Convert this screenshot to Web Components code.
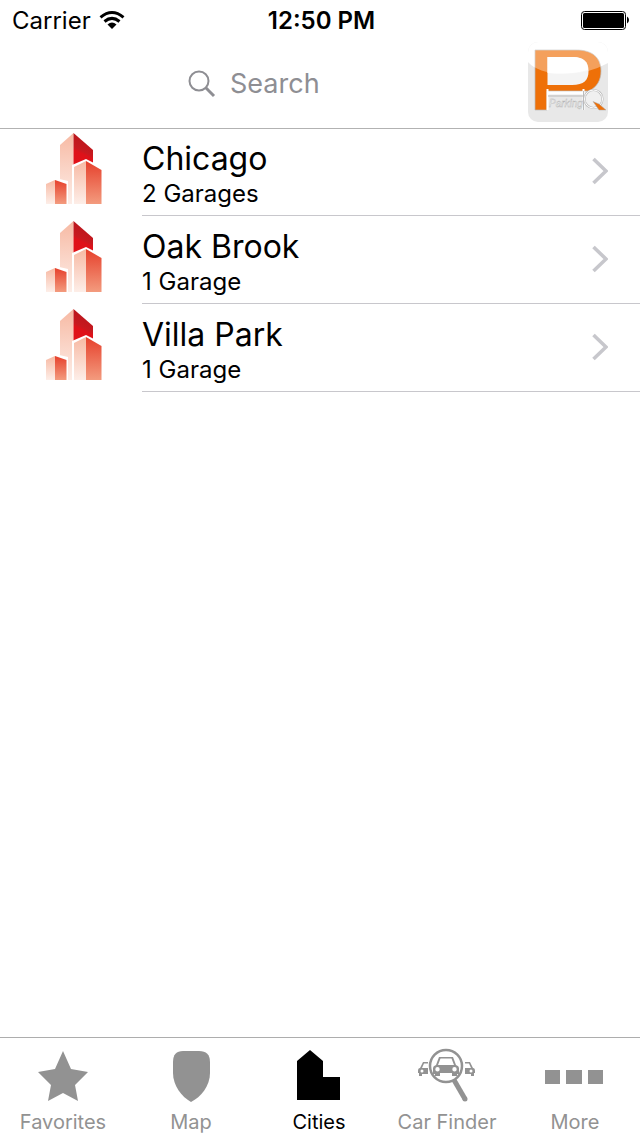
<!DOCTYPE html>
<html lang="en">
<head>
<meta charset="utf-8">
<meta name="viewport" content="width=device-width, initial-scale=1">
<title>Cities</title>
<style>
html, body { margin: 0; height: 100%; background: #fff; }
body { font-family: Inter, "Liberation Sans", sans-serif; color: #000; }
</style>
</head>
<body>
<parking-app></parking-app>
<script>
function define(name, html, setup) {
  const template = document.createElement('template');
  template.innerHTML = html;
  customElements.define(name, class extends HTMLElement {
    connectedCallback() {
      if (this.shadowRoot) return;
      this.attachShadow({ mode: 'open' }).append(template.content.cloneNode(true));
      if (setup) setup(this, this.shadowRoot);
    }
  });
}

define('status-bar', `
<style>
:host { display: grid; grid-template-columns: 1fr auto 1fr; align-items: center; height: 40px; padding: 0 11px 0 12px; font-size: 24px; line-height: 30px; }
.left { display: flex; align-items: center; gap: 8px; }
.left span, time { padding-top: 2px; }
time { font-weight: 600; padding-left: 2px; }
.battery { justify-self: end; }
svg { display: block; }
</style>
<span class="left"><span>Carrier</span>
<svg width="26" height="20" viewBox="0 0 26 20" aria-hidden="true"><g fill="none" stroke="#000" stroke-width="3"><path d="M1.5 7.3Q13 -2.3 24.5 7.3"/><path d="M5.5 11.5Q13 5.3 20.5 11.5"/></g><path d="M8.5 14.4Q13 10.7 17.5 14.4L13 19Z"/></svg></span>
<time>12:50 PM</time>
<svg class="battery" width="50" height="20" viewBox="0 0 50 20" role="img" aria-label="Battery full"><rect x="2.5" y="1.5" width="44" height="18" rx="3" fill="#fff" stroke="#000"/><rect x="4" y="3" width="41" height="15" rx="1.5"/><path d="M48 6.5Q50 7.5 50 10T48 13.5Z"/></svg>`);

define('search-field', `
<style>
:host { display: block; }
label { display: flex; align-items: center; justify-content: center; gap: 14px; height: 84px; }
svg { flex: none; }
input { width: 90px; border: 0; padding: 0; background: none; outline: 0; font: inherit; font-size: 27px; line-height: 36px; color: #000; }
input::placeholder { color: #8e8e93; opacity: 1; }
</style>
<label><svg width="28" height="28" viewBox="0 0 28 28" aria-hidden="true"><g fill="none" stroke="#8e8e93"><circle cx="11" cy="11" r="9.5" stroke-width="2"/><path d="M17.8 17.8L26 26" stroke-width="3"/></g></svg>
<input type="text" placeholder="Search" aria-label="Search"></label>`);

define('parking-logo', `
<style>:host { display: block; } svg { display: block; } text { font: italic 10px "Liberation Sans", sans-serif; }</style>
<svg width="80" height="80" viewBox="0 0 80 80">
<defs><clipPath id="tile"><rect width="80" height="80" rx="10"/></clipPath></defs>
<g clip-path="url(#tile)"><rect width="80" height="80" fill="#e8e8e8"/><path d="M0 0H80V21Q58 33 34 32T0 20Z" fill="#fff"/></g>
<path d="M7 8H48C65 8 73 16 73 29C73 38 69 45 61 49H19V68H7Z" fill="#ee7008" stroke="#b9b9b9" stroke-width=".7"/>
<path d="M19.5 15V43H44C56 43 60.5 38 60.5 29C60.5 20 56 15 45 15Z" fill="#f4f4f4"/>
<path d="M0 0H80V21Q58 33 34 32T0 20Z" fill="#fff" fill-opacity=".34" clip-path="url(#tile)"/>
<path d="M19.5 15V31Q42 33 60 28C60 20 55 15 45 15Z" fill="#fff"/>
<path d="M19.5 47V68M55.5 47V68" stroke="#fff" stroke-width="2"/><path d="M20 51H55" stroke="#fff" stroke-width="3"/><path d="M20 54H55M55.5 49V68" stroke="#bbb"/>
<text x="21" y="65" fill="#fff" stroke="#b0b0b0" stroke-width=".4">Parking</text>
<circle cx="65.5" cy="57" r="9" fill="#f0f0f0" stroke="#bbb" stroke-width="2.2"/><circle cx="65.5" cy="57" r="9" fill="none" stroke="#fff"/>
<path d="M65 59.5L71 62L78 68H71Z" fill="#ee7008" stroke="#aaa" stroke-width=".5"/>
</svg>`);

define('app-header', `
<style>
:host { display: block; position: relative; background: #fff; box-shadow: 0 1px #b2b2b2; }
.bar { display: flex; height: 88px; padding: 2px 32px 0 0; box-sizing: border-box; }
search-field { flex: 1; padding-right: 20px; }
</style>
<status-bar></status-bar>
<div class="bar"><search-field></search-field><parking-logo></parking-logo></div>`);

define('city-row', `
<style>
:host { display: block; }
a { display: flex; height: 88px; color: inherit; text-decoration: none; }
.icon { flex: none; width: 56px; height: 72px; padding: 5px 40px 0 46px; }
.body { flex: 1; display: flex; justify-content: space-between; box-sizing: border-box; border-bottom: 1px solid #c8c7cc; padding-right: 32px; }
.name { display: block; font-size: 32px; line-height: 40px; padding-top: 11px; }
.count { display: block; font-size: 24px; line-height: 30px; }
.chevron { align-self: center; padding-bottom: 2px; }
</style>
<a href="#"><svg class="icon" viewBox="0 0 56 72" aria-hidden="true">
<defs><linearGradient id="pale" x2="0" y2="1"><stop stop-color="#f7b9a3"/><stop offset="1" stop-color="#fdeee8"/></linearGradient>
<linearGradient id="red" x2="0" y2="1"><stop stop-color="#e6402c"/><stop offset="1" stop-color="#f39b7e"/></linearGradient>
<linearGradient id="deep" x1=".6" y1="0" x2=".3" y2="1"><stop stop-color="#b5161c"/><stop offset=".55" stop-color="#c8191f"/><stop offset=".65" stop-color="#df1119"/><stop offset="1" stop-color="#e01219"/></linearGradient></defs>
<path d="M14 12L27.5 0V71H14Z" fill="url(#pale)"/><path d="M27.5 0L47 17V32H27.5Z" fill="url(#deep)"/>
<path d="M26 72V32L40 26L58 35V72Z" fill="#fff"/><path d="M-1 49L9 45L22 48V72H-1Z" fill="#fff"/>
<path d="M28 34L40 28V71H28Z" fill="url(#pale)"/><path d="M40 28L55.5 37V71H40Z" fill="url(#red)"/>
<path d="M0 51L9 47V71H0Z" fill="url(#pale)"/><path d="M9 47L20.5 51V71H9Z" fill="url(#red)"/></svg>
<span class="body"><span><span class="name"><slot></slot></span><span class="count"><slot name="count"></slot></span></span>
<svg class="chevron" width="16" height="28" viewBox="0 0 16 28" aria-hidden="true"><path d="M1.5 2L14 14L1.5 26" fill="none" stroke="#c7c7cc" stroke-width="3.6"/></svg></span></a>`);

const tabIcons = {
  star: '<path d="M32 3L40 21L57 24L44 37L47 53L32 45L17 53L20 37L7 24L24 21Z"/>',
  shield: '<path d="M24 3H40Q51 3 51 14V25C51 38 42 49 32 54C23 49 14 38 14 25V14Q14 3 24 3Z"/>',
  city: '<path d="M10 52V13L23 2L36 13V29H53V52Z"/>',
  finder: '<circle cx="31" cy="18" r="16" fill="none" stroke="currentColor" stroke-width="2.5"/><path d="M39 32L50 51" stroke="currentColor" stroke-width="5"/><circle cx="50" cy="51" r="2.5"/><path fill-rule="evenodd" d="M24 9H38L41 17Q44 18 44 20V26H42V28H37V25H25V28H20V26H18V20Q18 18 21 17ZM25.5 10.5L23 17H39L36.5 10.5ZM22.5 19A2.2 2.2 0 1 0 22.5 23.4A2.2 2.2 0 1 0 22.5 19ZM39.5 19A2.2 2.2 0 1 0 39.5 23.4A2.2 2.2 0 1 0 39.5 19Z"/><path fill-rule="evenodd" d="M13 14H8L5 20Q3 20 3 23V25H4V28H7V26H13V20H7L9 15.5H13ZM7 21.5A1.5 1.5 0 1 1 7 24.5A1.5 1.5 0 1 1 7 21.5ZM50 14H55L58 20Q60 20 60 23V25H59V28H56V26H50V20H56L54 15.5H50ZM56 21.5A1.5 1.5 0 1 1 56 24.5A1.5 1.5 0 1 1 56 21.5Z"/>',
  more: '<path d="M2 22H17V36H2ZM23 22H39V36H23ZM45 22H60V36H45Z"/>'
};

define('tab-item', `
<style>
:host { display: block; flex: 1; color: #929292; }
:host([selected]) { color: #000; }
button { display: flex; flex-direction: column; align-items: center; width: 100%; height: 98px; padding: 10px 2px 0 0; border: 0; background: none; color: inherit; font: inherit; font-size: 20px; line-height: 28px; }
svg { display: block; flex: none; margin-bottom: 4px; }
</style>
<button type="button"><svg width="64" height="56" viewBox="0 0 64 56" fill="currentColor" aria-hidden="true"></svg><slot></slot></button>`,
(host, root) => {
  root.querySelector('svg').innerHTML = tabIcons[host.getAttribute('icon')];
  if (host.hasAttribute('selected')) root.querySelector('button').setAttribute('aria-current', 'page');
});

define('tab-bar', `
<style>:host { display: flex; border-top: 1px solid #adadad; background: #fff; }</style><slot></slot>`);

define('parking-app', `
<style>
:host { display: flex; flex-direction: column; min-height: 100%; }
main { flex: 1; }
</style>
<app-header></app-header>
<main>
<city-row>Chicago<span slot="count">2 Garages</span></city-row>
<city-row>Oak Brook<span slot="count">1 Garage</span></city-row>
<city-row>Villa Park<span slot="count">1 Garage</span></city-row>
</main>
<tab-bar>
<tab-item icon="star">Favorites</tab-item>
<tab-item icon="shield">Map</tab-item>
<tab-item icon="city" selected>Cities</tab-item>
<tab-item icon="finder">Car Finder</tab-item>
<tab-item icon="more">More</tab-item>
</tab-bar>`);
</script>
</body>
</html>
